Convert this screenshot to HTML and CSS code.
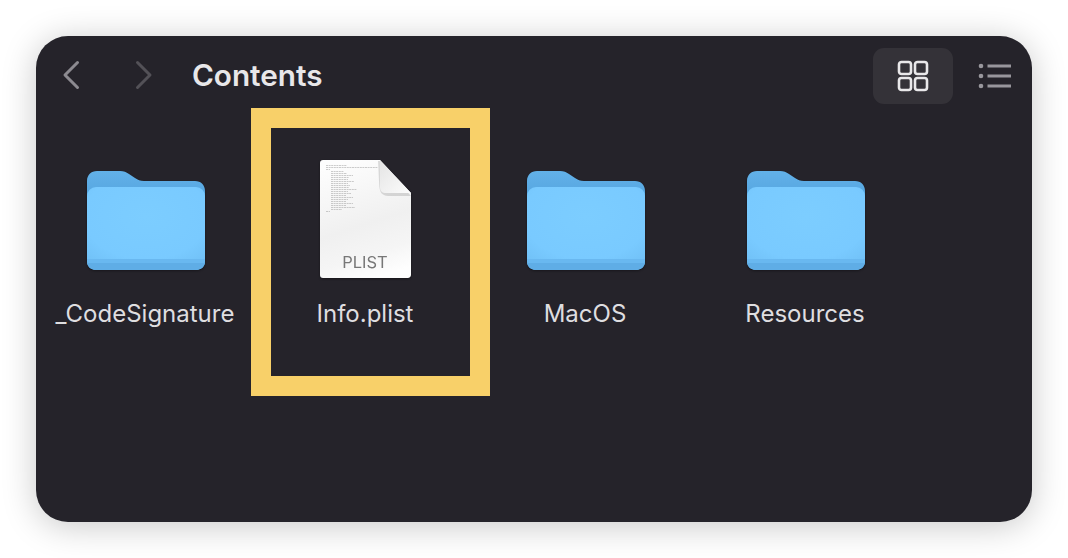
FILE: index.html
```html
<!DOCTYPE html>
<html lang="en">
<head>
<meta charset="utf-8">
<title>Contents</title>
<link rel="stylesheet" href="styles.css">
</head>
<body>
<svg class="defs" width="0" height="0" aria-hidden="true">
  <defs>
    <linearGradient id="folderBack" x1="0" y1="0" x2="0" y2="1">
      <stop offset="0" stop-color="#62b1e8"/>
      <stop offset="1" stop-color="#4f9fdc"/>
    </linearGradient>
    <radialGradient id="folderFront" cx="0.5" cy="0.35" r="0.75">
      <stop offset="0" stop-color="#7ccdff"/>
      <stop offset="0.7" stop-color="#79caff"/>
      <stop offset="1" stop-color="#70c0f6"/>
    </radialGradient>
    <linearGradient id="paper" x1="0.35" y1="0" x2="0.6" y2="1">
      <stop offset="0" stop-color="#fdfdfd"/>
      <stop offset="0.55" stop-color="#f0f0f0"/>
      <stop offset="0.8" stop-color="#f5f5f5"/>
      <stop offset="1" stop-color="#fefefe"/>
    </linearGradient>
    <linearGradient id="curl" x1="0" y1="0" x2="1" y2="1">
      <stop offset="0" stop-color="#e4e4e4"/>
      <stop offset="1" stop-color="#fcfcfc"/>
    </linearGradient>
    <symbol id="folder" viewBox="0 0 118 100">
      <path fill="url(#folderBack)" d="M0 10C0 4 4 0 10 0H33C37 0 39 1 42 3L48 7C51 9 53 10 57 10H108C114 10 118 14 118 20V40H0Z"/>
      <rect x="0" y="16" width="118" height="83" rx="9" fill="url(#folderFront)"/>
      <path fill="#69b8f0" d="M0 88H118V90C118 95 114 99 108 99H10C4 99 0 95 0 90Z"/>
      <path fill="#5fade6" d="M0 92H118C117 97 113 99 108 99H10C5 99 1 97 0 92Z"/>
    </symbol>
  </defs>
</svg>
<main class="window">
  <header class="toolbar">
    <nav class="nav">
      <svg class="chevron" viewBox="0 0 18 30" aria-label="Back"><path class="chevron-back" d="M15.500 2.500 3 15l12.500 12.500"/></svg>
      <svg class="chevron" viewBox="0 0 18 30" aria-label="Forward"><path class="chevron-forward" d="M2.500 2.500 15 15 2.500 27.500"/></svg>
    </nav>
    <h1 class="title">Contents</h1>
    <div class="views">
      <button class="view view-active" aria-label="Icons">
        <svg width="32" height="32" viewBox="0 0 32 32"><g class="grid-glyph"><rect x="2" y="2" width="12" height="12" rx="2.500"/><rect x="18" y="2" width="12" height="12" rx="2.500"/><rect x="2" y="18" width="12" height="12" rx="2.500"/><rect x="18" y="18" width="12" height="12" rx="2.500"/></g></svg>
      </button>
      <button class="view view-list" aria-label="List">
        <svg width="34" height="26" viewBox="0 0 34 26"><g class="list-dots"><circle cx="3" cy="3" r="2.3"/><circle cx="3" cy="13" r="2.3"/><circle cx="3" cy="23" r="2.3"/></g><g class="list-lines"><path d="M9.5 3H33M9.5 13H33M9.5 23H33"/></g></svg>
      </button>
    </div>
  </header>
  <section class="files">
    <figure class="file">
      <svg class="folder"><use href="#folder"/></svg>
      <figcaption class="name">_CodeSignature</figcaption>
    </figure>
    <figure class="file file-marked">
      <div class="doc">
        <svg class="doc-art" viewBox="0 0 91 118" width="91" height="118">
          <path fill="url(#paper)" d="M3 0H60L91 33V115C91 117 89 118 88 118H3C1 118 0 117 0 115V3C0 1 1 0 3 0Z"/>
          <g class="greek">
            <path d="M6 5.500H27M6 7.500H58M6 9.500H10"/>
            <path d="M11 11.500H24M11 13.500H27M11 15.500H33M11 17.500H29M11 19.500H28M11 21.500H34M11 23.500H28M11 25.500H30M11 27.500H29M11 29.500H37M11 31.500H28M11 33.500H31M11 35.500H26M11 37.500H33M11 39.500H28M11 41.500H26M11 43.500H33M11 45.500H26M11 47.500H35M11 49.500H22"/>
            <path d="M6 51.500H10"/>
          </g>
          <path class="curl-shadow" d="M58 1C59 18 59 27 60 30 61 34 64 36 70 36H91L60 1Z"/>
          <path fill="url(#curl)" d="M60 0 91 33H66C62 33 60 31 60 27Z"/>
        </svg>
        <span class="doc-type">PLIST</span>
      </div>
      <figcaption class="name">Info.plist</figcaption>
    </figure>
    <figure class="file">
      <svg class="folder"><use href="#folder"/></svg>
      <figcaption class="name">MacOS</figcaption>
    </figure>
    <figure class="file">
      <svg class="folder"><use href="#folder"/></svg>
      <figcaption class="name">Resources</figcaption>
    </figure>
  </section>
</main>
</body>
</html>
```
FILE: styles.css
```css
*, *::after { box-sizing: border-box; }

html, body { height: 100%; }

body {
  margin: 0;
  padding: 36px;
  background: #fff;
  font-family: Inter, "Liberation Sans", sans-serif;
  overflow: hidden;
}

.defs { position: absolute; }

.window {
  width: 996px;
  height: 486px;
  background: #25232a;
  border-radius: 32px;
  box-shadow: 0 4px 34px rgba(0, 0, 0, 0.22);
  overflow: hidden;
}

.toolbar {
  display: flex;
  align-items: center;
  height: 68px;
  padding: 12px 10px 0 26px;
}

.nav {
  display: flex;
  gap: 55px;
  align-items: center;
  margin-bottom: 2px;
}

.chevron { width: 18px; height: 30px; display: block; fill: none; stroke-width: 3; stroke-linecap: round; stroke-linejoin: round; }
.chevron-back { stroke: #8c8a90; }
.chevron-forward { stroke: #535157; }

.title {
  margin: 0 0 2px 39px;
  font-size: 29.700px;
  font-weight: 600;
  color: #e8e7e9;
}

.views {
  margin-left: auto;
  display: flex;
  align-items: center;
  gap: 15px;
}

.view {
  width: 80px;
  height: 56px;
  padding: 0;
  border: 0;
  border-radius: 11px;
  background: transparent;
  display: flex;
  align-items: center;
  justify-content: center;
}

.view-list { width: 54px; }
.view-active { background: #343238; }

.grid-glyph { fill: none; stroke: #e9e8ea; stroke-width: 2.6; }
.list-dots { fill: #98969c; }
.list-lines { fill: none; stroke: #98969c; stroke-width: 3; }

.files {
  display: grid;
  grid-template-columns: repeat(4, 220px);
  justify-content: start;
  padding-top: 20px;
  margin-left: -1px;
}

.file {
  position: relative;
  margin: 0;
  display: flex;
  flex-direction: column;
  align-items: center;
}

.file-marked::after {
  content: "";
  position: absolute;
  left: -4px;
  top: -16px;
  width: 239px;
  height: 288px;
  border: 20px solid #f8d069;
}

.folder {
  display: block;
  width: 118px;
  height: 100px;
  margin: 47px 0 0 2px;
  filter: drop-shadow(0 1px 1px rgba(0, 0, 0, 0.35));
}

.doc {
  position: relative;
  width: 91px;
  height: 118px;
  margin-top: 36px;
  filter: drop-shadow(0 1px 1px rgba(0, 0, 0, 0.4));
}

.doc-art { display: block; }

.greek { fill: none; stroke: #9a9a9a; stroke-width: 0.5; stroke-dasharray: 2 0.6; }

.curl-shadow { fill: rgba(0, 0, 0, 0.13); }

.doc-type {
  position: absolute;
  left: 0;
  right: 0;
  bottom: 6px;
  text-align: center;
  font-family: Inter, "Liberation Sans", sans-serif;
  font-size: 16.500px;
  line-height: 20px;
  color: #777;
}

.name {
  margin-top: 28px;
  font-size: 24px;
  line-height: 30px;
  color: #dfdee0;
  white-space: nowrap;
}

.doc + .name { margin-top: 21px; }
```
